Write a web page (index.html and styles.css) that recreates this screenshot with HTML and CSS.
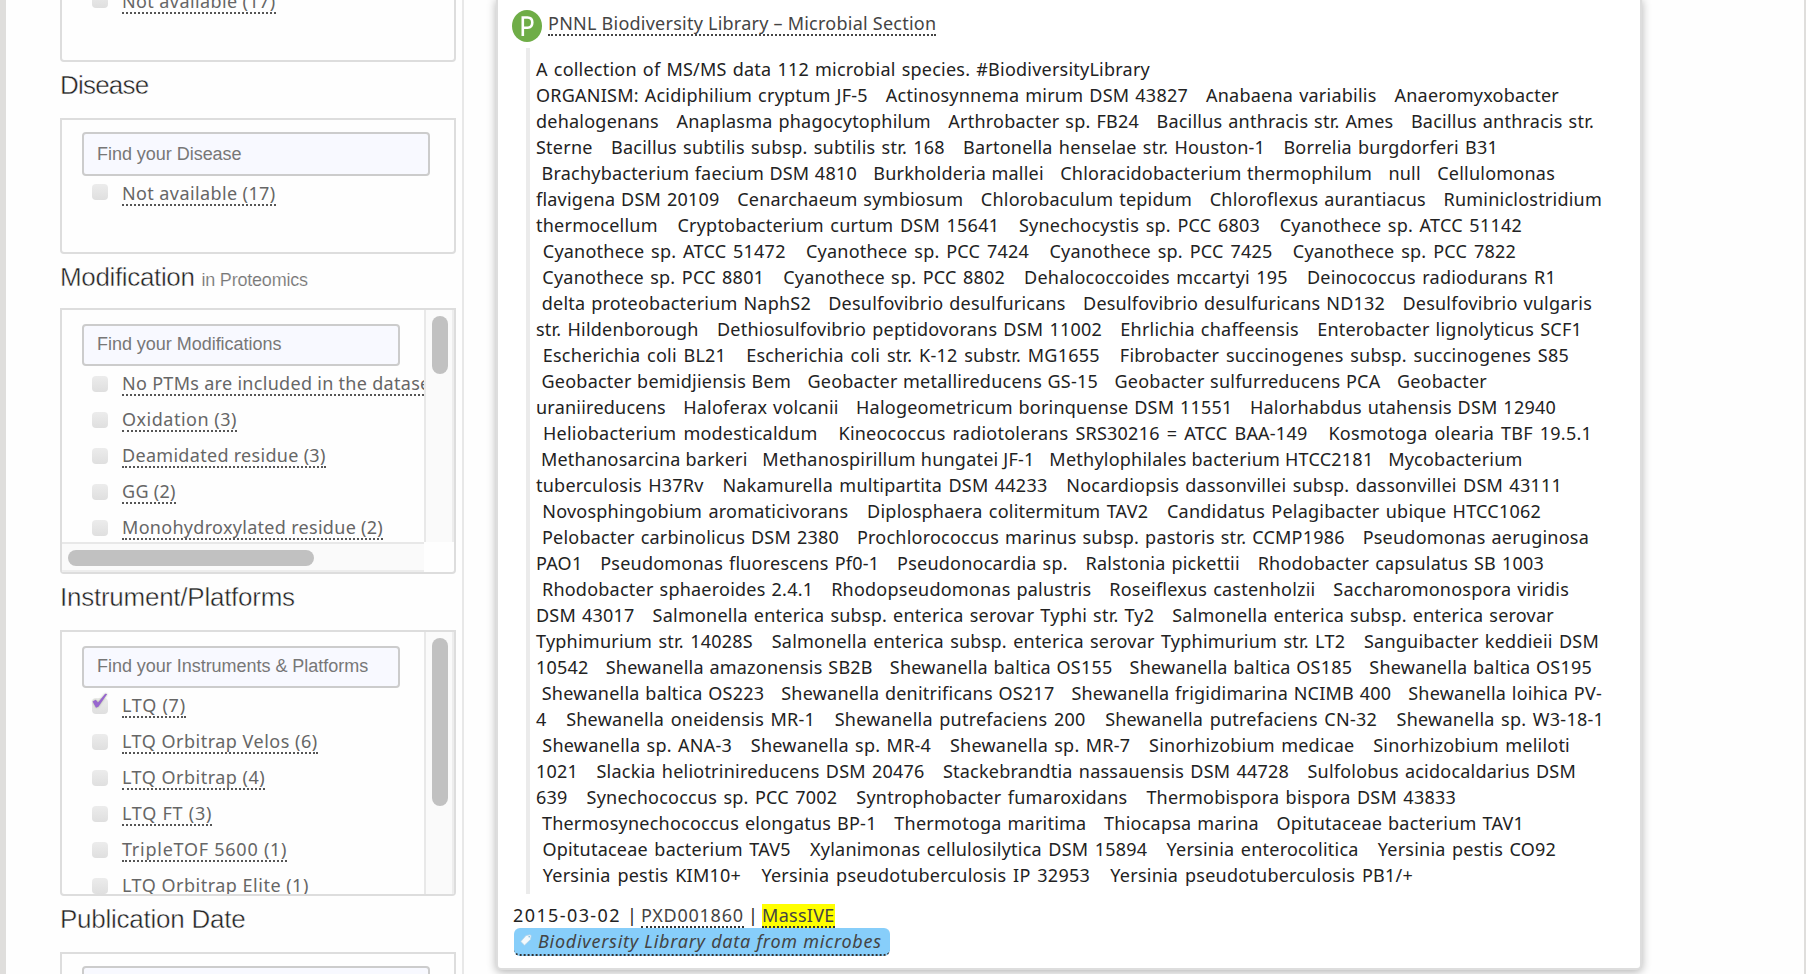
FILE: index.html
```html
<!DOCTYPE html>
<html lang="en">
<head>
<meta charset="utf-8">
<title>Dataset search</title>
<link rel="stylesheet" href="styles.css">
</head>
<body>
<div class="page">
  <aside class="sidebar">
    <section class="panel panel-short panel-first">
      <div class="field">Find your Tissue</div>
      <div class="row"><i class="box"></i><a class="s-na">Not available (17)</a></div>
    </section>
    <h2 class="h-disease">Disease</h2>
    <section class="panel panel-short">
      <div class="field">Find your Disease</div>
      <div class="row"><i class="box"></i><a class="s-na">Not available (17)</a></div>
    </section>
    <h2 class="h-mod">Modification <small>in Proteomics</small></h2>
    <section class="panel panel-scroll">
      <div class="content">
        <div class="view">
          <div class="field">Find your Modifications</div>
          <div class="row"><i class="box"></i><a>No PTMs are included in the dataset (9)</a></div>
          <div class="row"><i class="box"></i><a class="s-wide">Oxidation (3)</a></div>
          <div class="row"><i class="box"></i><a>Deamidated residue (3)</a></div>
          <div class="row"><i class="box"></i><a>GG (2)</a></div>
          <div class="row"><i class="box"></i><a>Monohydroxylated residue (2)</a></div>
        </div>
        <div class="hbar"><div class="hthumb"></div></div>
      </div>
      <div class="vbar vbar-short"><div class="vthumb thumb-mod"></div></div>
    </section>
    <h2>Instrument/Platforms</h2>
    <section class="panel panel-scroll">
      <div class="content">
        <div class="view">
          <div class="field">Find your Instruments &amp; Platforms</div>
          <div class="row"><i class="box"><svg class="check" viewBox="0 0 16 16" width="16" height="16"><path d="M.6 8.600 3.800 6.800 6 9.600 13.200.8 15.200 1 6.400 13.800 4 14.800Z" fill="#9866cf"/></svg></i><a class="s-wider">LTQ (7)</a></div>
          <div class="row"><i class="box"></i><a class="s-wide">LTQ Orbitrap Velos (6)</a></div>
          <div class="row"><i class="box"></i><a class="s-wide">LTQ Orbitrap (4)</a></div>
          <div class="row"><i class="box"></i><a class="s-wider">LTQ FT (3)</a></div>
          <div class="row"><i class="box"></i><a class="s-wider">TripleTOF 5600 (1)</a></div>
          <div class="row"><i class="box"></i><a class="s-wide">LTQ Orbitrap Elite (1)</a></div>
        </div>
      </div>
      <div class="vbar"><div class="vthumb thumb-inst"></div></div>
    </section>
    <h2 class="h-pub">Publication Date</h2>
    <section class="panel panel-short">
      <div class="field">Find your Date</div>
    </section>
  </aside>
  <main class="card">
    <header class="title">
      <svg class="badge" viewBox="0 0 30 32" width="30" height="32"><ellipse cx="15" cy="16" rx="15" ry="16" fill="#6fad47"/><path d="M10.800 26V7.500H15.500Q20.300 7.500 20.300 12.500T15.500 17.800H10.800" fill="none" stroke="#fff" stroke-width="2.600"/></svg>
      <a>PNNL Biodiversity Library – Microbial Section</a>
    </header>
    <blockquote>
<p style="width:614px">A collection of MS/MS data 112 microbial species. #BiodiversityLibrary</p>
<p style="width:1023px">ORGANISM: Acidiphilium cryptum JF-5&nbsp; &nbsp;Actinosynnema mirum DSM 43827&nbsp; &nbsp;Anabaena variabilis&nbsp; &nbsp;Anaeromyxobacter</p>
<p style="width:1058px">dehalogenans&nbsp; &nbsp;Anaplasma phagocytophilum&nbsp; &nbsp;Arthrobacter sp. FB24&nbsp; &nbsp;Bacillus anthracis str. Ames&nbsp; &nbsp;Bacillus anthracis str.</p>
<p style="width:962px">Sterne&nbsp; &nbsp;Bacillus subtilis subsp. subtilis str. 168&nbsp; &nbsp;Bartonella henselae str. Houston-1&nbsp; &nbsp;Borrelia burgdorferi B31</p>
<p style="width:1019px">&nbsp;Brachybacterium faecium DSM 4810&nbsp; &nbsp;Burkholderia mallei&nbsp; &nbsp;Chloracidobacterium thermophilum&nbsp; &nbsp;null&nbsp; &nbsp;Cellulomonas</p>
<p style="width:1066px">flavigena DSM 20109&nbsp; &nbsp;Cenarchaeum symbiosum&nbsp; &nbsp;Chlorobaculum tepidum&nbsp; &nbsp;Chloroflexus aurantiacus&nbsp; &nbsp;Ruminiclostridium</p>
<p style="width:986px">thermocellum&nbsp; &nbsp;Cryptobacterium curtum DSM 15641&nbsp; &nbsp;Synechocystis sp. PCC 6803&nbsp; &nbsp;Cyanothece sp. ATCC 51142</p>
<p style="width:980px">&nbsp;Cyanothece sp. ATCC 51472&nbsp; &nbsp;Cyanothece sp. PCC 7424&nbsp; &nbsp;Cyanothece sp. PCC 7425&nbsp; &nbsp;Cyanothece sp. PCC 7822</p>
<p style="width:1020px">&nbsp;Cyanothece sp. PCC 8801&nbsp; &nbsp;Cyanothece sp. PCC 8802&nbsp; &nbsp;Dehalococcoides mccartyi 195&nbsp; &nbsp;Deinococcus radiodurans R1</p>
<p style="width:1056px">&nbsp;delta proteobacterium NaphS2&nbsp; &nbsp;Desulfovibrio desulfuricans&nbsp; &nbsp;Desulfovibrio desulfuricans ND132&nbsp; &nbsp;Desulfovibrio vulgaris</p>
<p style="width:1046px">str. Hildenborough&nbsp; &nbsp;Dethiosulfovibrio peptidovorans DSM 11002&nbsp; &nbsp;Ehrlichia chaffeensis&nbsp; &nbsp;Enterobacter lignolyticus SCF1</p>
<p style="width:1033px">&nbsp;Escherichia coli BL21&nbsp; &nbsp;Escherichia coli str. K-12 substr. MG1655&nbsp; &nbsp;Fibrobacter succinogenes subsp. succinogenes S85</p>
<p style="width:951px">&nbsp;Geobacter bemidjiensis Bem&nbsp; &nbsp;Geobacter metallireducens GS-15&nbsp; &nbsp;Geobacter sulfurreducens PCA&nbsp; &nbsp;Geobacter</p>
<p style="width:1020px">uraniireducens&nbsp; &nbsp;Haloferax volcanii&nbsp; &nbsp;Halogeometricum borinquense DSM 11551&nbsp; &nbsp;Halorhabdus utahensis DSM 12940</p>
<p style="width:1056px">&nbsp;Heliobacterium modesticaldum&nbsp; &nbsp;Kineococcus radiotolerans SRS30216 = ATCC BAA-149&nbsp; &nbsp;Kosmotoga olearia TBF 19.5.1</p>
<p style="width:970px">&nbsp;Methanosarcina barkeri&nbsp; &nbsp;Methanospirillum hungatei JF-1&nbsp; &nbsp;Methylophilales bacterium HTCC2181&nbsp; &nbsp;Mycobacterium</p>
<p style="width:1026px">tuberculosis H37Rv&nbsp; &nbsp;Nakamurella multipartita DSM 44233&nbsp; &nbsp;Nocardiopsis dassonvillei subsp. dassonvillei DSM 43111</p>
<p style="width:1005px">&nbsp;Novosphingobium aromaticivorans&nbsp; &nbsp;Diplosphaera colitermitum TAV2&nbsp; &nbsp;Candidatus Pelagibacter ubique HTCC1062</p>
<p style="width:1053px">&nbsp;Pelobacter carbinolicus DSM 2380&nbsp; &nbsp;Prochlorococcus marinus subsp. pastoris str. CCMP1986&nbsp; &nbsp;Pseudomonas aeruginosa</p>
<p style="width:1008px">PAO1&nbsp; &nbsp;Pseudomonas fluorescens Pf0-1&nbsp; &nbsp;Pseudonocardia sp.&nbsp; &nbsp;Ralstonia pickettii&nbsp; &nbsp;Rhodobacter capsulatus SB 1003</p>
<p style="width:1033px">&nbsp;Rhodobacter sphaeroides 2.4.1&nbsp; &nbsp;Rhodopseudomonas palustris&nbsp; &nbsp;Roseiflexus castenholzii&nbsp; &nbsp;Saccharomonospora viridis</p>
<p style="width:1018px">DSM 43017&nbsp; &nbsp;Salmonella enterica subsp. enterica serovar Typhi str. Ty2&nbsp; &nbsp;Salmonella enterica subsp. enterica serovar</p>
<p style="width:1063px">Typhimurium str. 14028S&nbsp; &nbsp;Salmonella enterica subsp. enterica serovar Typhimurium str. LT2&nbsp; &nbsp;Sanguibacter keddieii DSM</p>
<p style="width:1056px">10542&nbsp; &nbsp;Shewanella amazonensis SB2B&nbsp; &nbsp;Shewanella baltica OS155&nbsp; &nbsp;Shewanella baltica OS185&nbsp; &nbsp;Shewanella baltica OS195</p>
<p style="width:1066px">&nbsp;Shewanella baltica OS223&nbsp; &nbsp;Shewanella denitrificans OS217&nbsp; &nbsp;Shewanella frigidimarina NCIMB 400&nbsp; &nbsp;Shewanella loihica PV-</p>
<p style="width:1068px">4&nbsp; &nbsp;Shewanella oneidensis MR-1&nbsp; &nbsp;Shewanella putrefaciens 200&nbsp; &nbsp;Shewanella putrefaciens CN-32&nbsp; &nbsp;Shewanella sp. W3-18-1</p>
<p style="width:1034px">&nbsp;Shewanella sp. ANA-3&nbsp; &nbsp;Shewanella sp. MR-4&nbsp; &nbsp;Shewanella sp. MR-7&nbsp; &nbsp;Sinorhizobium medicae&nbsp; &nbsp;Sinorhizobium meliloti</p>
<p style="width:1040px">1021&nbsp; &nbsp;Slackia heliotrinireducens DSM 20476&nbsp; &nbsp;Stackebrandtia nassauensis DSM 44728&nbsp; &nbsp;Sulfolobus acidocaldarius DSM</p>
<p style="width:920px">639&nbsp; &nbsp;Synechococcus sp. PCC 7002&nbsp; &nbsp;Syntrophobacter fumaroxidans&nbsp; &nbsp;Thermobispora bispora DSM 43833</p>
<p style="width:988px">&nbsp;Thermosynechococcus elongatus BP-1&nbsp; &nbsp;Thermotoga maritima&nbsp; &nbsp;Thiocapsa marina&nbsp; &nbsp;Opitutaceae bacterium TAV1</p>
<p style="width:1020px">&nbsp;Opitutaceae bacterium TAV5&nbsp; &nbsp;Xylanimonas cellulosilytica DSM 15894&nbsp; &nbsp;Yersinia enterocolitica&nbsp; &nbsp;Yersinia pestis CO92</p>
<p style="width:877px">&nbsp;Yersinia pestis KIM10+&nbsp; &nbsp;Yersinia pseudotuberculosis IP 32953&nbsp; &nbsp;Yersinia pseudotuberculosis PB1/+</p>
    </blockquote>
    <div class="meta"><span class="date">2015-03-02</span><span class="sep">|</span><a class="acc">PXD001860</a><span class="sep">|</span><a class="hit">MassIVE</a></div>
    <a class="tag"><svg viewBox="0 0 12 12" width="12" height="12"><path d="M6 1.500 10.200.8 11.200 1.800 10.500 5.500 4.500 11.200.8 7.500Z" fill="#f4fafd" stroke="#b5d3e6" stroke-width=".8"/><circle cx="9.200" cy="2.800" r=".8" fill="#7bb8de"/></svg><em>Biodiversity Library data from microbes</em></a>
  </main>
</div>
</body>
</html>
```
FILE: styles.css
```css
* { box-sizing: border-box; }
html, body { margin: 0; height: 974px; overflow: hidden; }
body {
  background: #dfdedc;
  color: #222;
  font: 18px/26px "Noto Sans", sans-serif;
}
.page {
  display: flex;
  width: 1798px;
  height: 974px;
  margin-left: 6px;
  background: #fefefe;
  overflow: hidden;
}
.sidebar {
  flex: none;
  width: 458px;
  height: 974px;
  padding-left: 54px;
  border-right: 2px solid #e8e8e8;
}
.panel {
  width: 396px;
  border: 2px solid #ddd;
  border-radius: 0 0 4px 4px;
  overflow: hidden;
}
.panel-first { margin-top: -74px; }
.panel-short { height: 136px; padding: 12px 20px 0; }
.panel-scroll { display: flex; height: 266px; }
.content { width: 362px; display: flex; flex-direction: column; }
.view { flex: 1; min-height: 0; overflow: hidden; padding: 14px 0 0 20px; }
.field {
  width: 318px;
  height: 42px;
  padding: 0 13px;
  border: 2px solid #ccc;
  border-radius: 4px;
  background: #f8f9ff;
  color: #777;
  font: 18px/37px "Liberation Sans", Arial, sans-serif;
  letter-spacing: -0.03px;
  white-space: nowrap;
}
.panel-short .field { width: 348px; height: 44px; line-height: 40px; }
.row {
  display: flex;
  height: 36px;
  padding: 3px 0 0 10px;
  white-space: nowrap;
}
.row:nth-child(2) { margin-top: 2px; }
.panel-short .row:nth-child(2) { margin-top: 0; }
.box {
  position: relative;
  flex: none;
  width: 16px;
  height: 16px;
  margin: 5px 14px 0 0;
  border-radius: 4px;
  background: linear-gradient(#ececec, #dfdfdf);
}
.row a { height: 25px; line-height: 24px; color: #666; border-bottom: 2px dotted #555; letter-spacing: .3px; }
.panel-short .row a { height: 27px; line-height: 28px; }
.row .s-na { letter-spacing: .4px; }
.row .s-wide { letter-spacing: .5px; }
.row .s-wider { letter-spacing: .75px; }
.check { position: absolute; left: 0; top: -5px; overflow: visible; filter: drop-shadow(0 0 1px #a8b597); }
h2 {
  height: 56px;
  margin: 0;
  font: 26px/46px "Liberation Sans", Arial, sans-serif;
  letter-spacing: -.25px;
  color: #222;
  -webkit-text-stroke: .45px #fefefe;
  white-space: nowrap;
}
.h-disease { letter-spacing: -.8px; }
.h-mod { height: 54px; letter-spacing: -.35px; }
h2 small { font-size: 18px; letter-spacing: -.2px; color: #777; -webkit-text-stroke: .15px #fefefe; }
.hbar {
  height: 30px;
  padding: 6px 6px 0;
  border-top: 2px solid #e8e8e8;
  border-bottom: 2px solid #ededed;
  background: #fafafa;
}
.hthumb { width: 246px; height: 16px; border-radius: 8px; background: #c1c1c1; }
.vbar {
  width: 30px;
  padding: 6px 6px 0;
  border-left: 2px solid #e8e8e8;
  border-right: 2px solid #ededed;
  background: #fafafa;
}
.vbar-short { height: 232px; }
.vthumb { width: 16px; border-radius: 8px; background: #c1c1c1; }
.thumb-mod { height: 58px; }
.thumb-inst { height: 168px; }
.card {
  width: 1142px;
  height: 968px;
  margin-left: 34px;
  padding-left: 16px;
  background: #fff;
  border-radius: 0 0 3px 3px;
  box-shadow: 0 0 0 2px #ddd, 0 2px 10px 2px rgba(0, 0, 0, .3);
}
.title { display: flex; height: 48px; padding-top: 10px; }
.badge { margin: 0 6px 0 -2px; }
.title a { height: 26px; line-height: 26px; color: #444; border-bottom: 2px dotted #444; letter-spacing: .24px; white-space: nowrap; }
blockquote {
  height: 846px;
  margin: 0 0 0 12px;
  padding: 8px 0 0 6px;
  border-left: 4px solid #ebebeb;
}
blockquote p {
  margin: 0;
  height: 26px;
  white-space: nowrap;
  text-align: justify;
  text-align-last: justify;
  letter-spacing: .23px;
}
.meta { display: flex; height: 34px; padding-top: 10px; margin-left: -1px; letter-spacing: .3px; }
.meta span { line-height: 22px; }
.meta a { height: 24px; line-height: 22px; color: #444; border-bottom: 2px dotted #333; }
.meta .date { width: 110px; letter-spacing: 1.4px; }
.meta .acc { width: 103px; letter-spacing: .75px; }
.sep { width: 18px; text-align: center; }
.meta .hit { background: #ff0; }
.tag {
  display: flex;
  width: 376px;
  height: 28px;
  padding: 6px 0 0 6px;
  background: #87cefa;
  border-bottom: 2px dotted #333;
  border-radius: 6px;
  color: #444;
  white-space: nowrap;
}
.tag em { margin: -6px 0 0 6px; letter-spacing: .74px; }
```
